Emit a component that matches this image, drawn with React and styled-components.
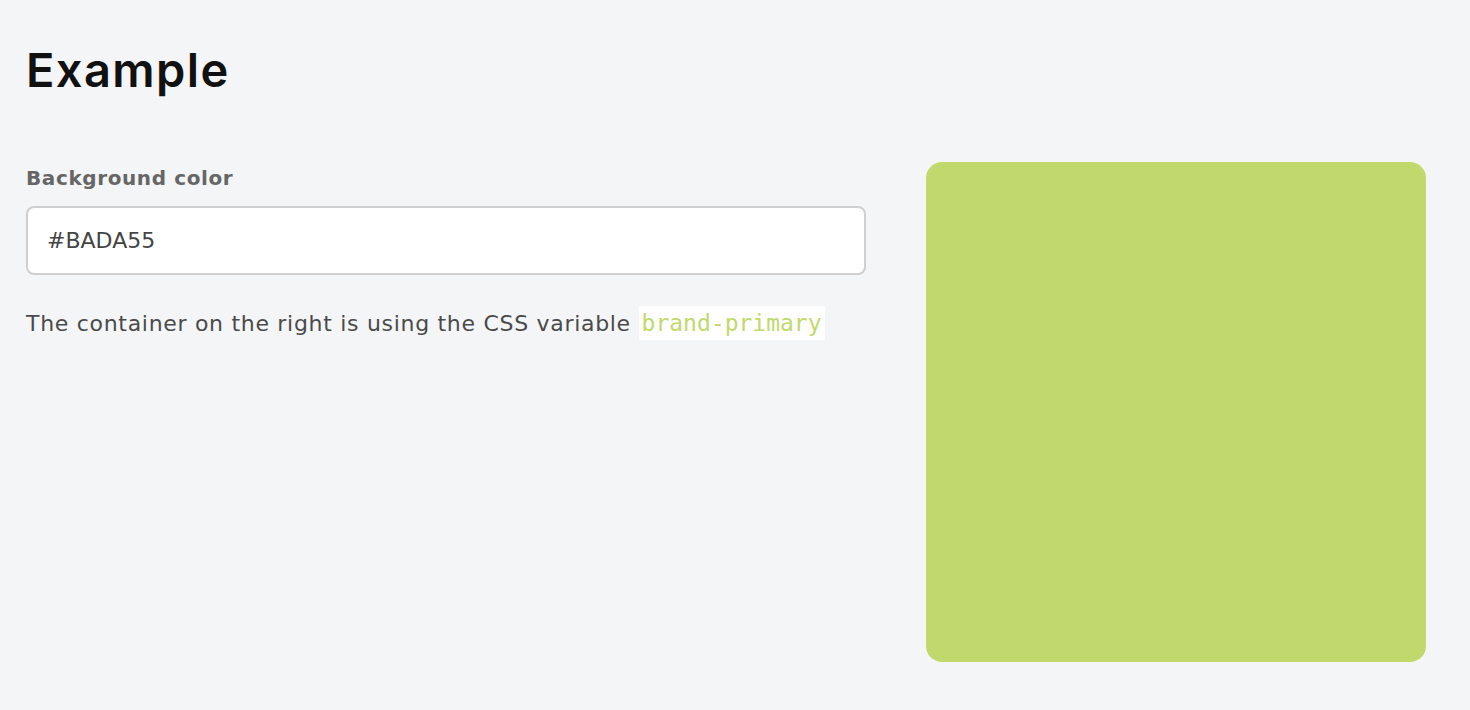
import React, { useState } from "react";
import styled, { createGlobalStyle } from "styled-components";

const GlobalStyle = createGlobalStyle`
  body {
    margin: 0;
    background: #f4f5f7;
    font-family: "DejaVu Sans", "Noto Sans", sans-serif;
  }
`;

const Page = styled.div`
  padding: 40px 44px 40px 26px;
`;

const Title = styled.h1`
  margin: 0;
  font-family: "Inter", "Noto Sans", sans-serif;
  font-size: 47px;
  line-height: 60px;
  font-weight: 600;
  color: #111;
  letter-spacing: 1.4px;
`;

const Layout = styled.div`
  display: grid;
  grid-template-columns: 840px 500px;
  justify-content: space-between;
  margin-top: 62px;
`;

const Form = styled.div`
  display: flex;
  flex-direction: column;
  padding-top: 2px;
`;

const Label = styled.label`
  font-size: 20px;
  line-height: 28px;
  font-weight: 700;
  color: #666;
  letter-spacing: 0.6px;
`;

const Input = styled.input`
  margin-top: 14px;
  height: 69px;
  box-sizing: border-box;
  border: 2px solid #cfcfcf;
  border-radius: 8px;
  background: #fff;
  padding: 0 19px;
  font-family: inherit;
  font-size: 22px;
  color: #444;
  outline: none;
`;

const Note = styled.p`
  margin: 31px 0 0;
  font-size: 22px;
  line-height: 34px;
  color: #4a4a4a;
  letter-spacing: 0.7px;
`;

const Code = styled.code`
  display: inline-block;
  background: #fff;
  color: ${(p) => p.$color};
  font-family: "DejaVu Sans Mono", "Liberation Mono", monospace;
  font-size: 23px;
  line-height: 34px;
  letter-spacing: 0;
  padding: 0 3px;
`;

const Swatch = styled.div`
  width: 500px;
  height: 500px;
  border-radius: 16px;
  background: ${(p) => p.$color};
`;

export default function App() {
  const [color, setColor] = useState("#BADA55");
  const shown = "#c1d96c";
  return (
    <Page>
      <GlobalStyle />
      <Title>Example</Title>
      <Layout>
        <Form>
          <Label htmlFor="bg">Background color</Label>
          <Input id="bg" value={color} onChange={(e) => setColor(e.target.value)} />
          <Note>
            The container on the right is using the CSS variable <Code $color={shown}>brand-primary</Code>
          </Note>
        </Form>
        <Swatch $color={shown} />
      </Layout>
    </Page>
  );
}
